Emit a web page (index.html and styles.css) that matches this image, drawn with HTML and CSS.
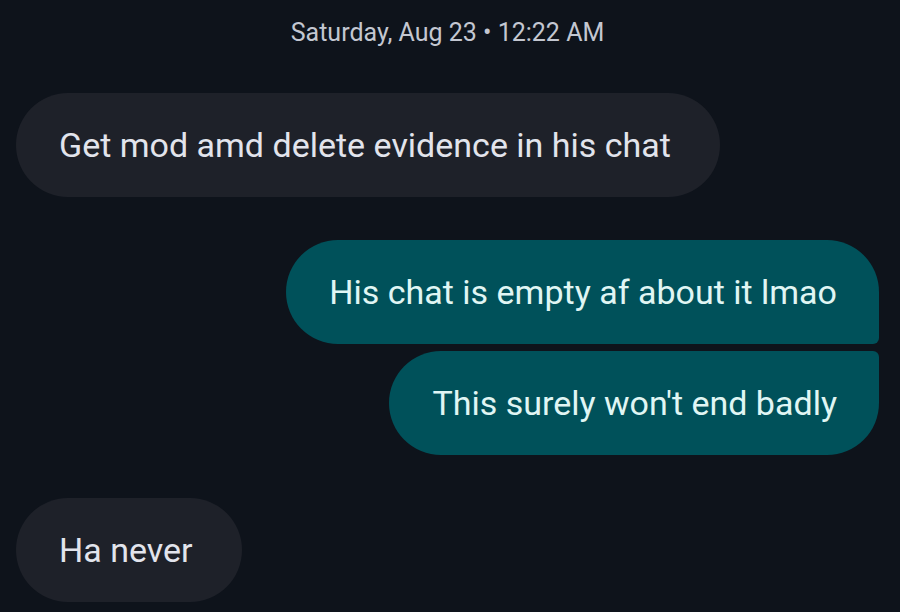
FILE: index.html
```html
<!DOCTYPE html>
<html>
<head>
<meta charset="utf-8">
<link rel="stylesheet" href="styles.css">
</head>
<body>
<div class="thread">
  <div class="stamp">Saturday, Aug 23 • 12:22 AM</div>
  <div class="row in"><div class="bubble in-b">Get mod amd delete evidence in his chat</div></div>
  <div class="group out">
    <div class="bubble out-b first">His chat is empty af about it lmao</div>
    <div class="bubble out-b last">This surely won't end badly</div>
  </div>
  <div class="row in"><div class="bubble in-b">Ha never</div></div>
</div>
</body>
</html>
```
FILE: styles.css
```css
html, body {
  margin: 0;
  padding: 0;
  background: #0e131b;
  height: 100%;
  overflow: hidden;
}
.thread {
  display: flex;
  flex-direction: column;
  padding: 0 21px 0 16px;
  font-family: Roboto, "Noto Sans", sans-serif;
}
.stamp {
  text-align: center;
  color: #c3c7d1;
  font-size: 25px;
  line-height: 30px;
  padding-top: 18px;
  margin-bottom: 45px;
}
.row {
  display: flex;
}
.row.in {
  justify-content: flex-start;
}
.group {
  display: flex;
  flex-direction: column;
  align-items: flex-end;
  gap: 7px;
  margin: 43px 0;
}
.bubble {
  height: 104px;
  box-sizing: border-box;
  display: flex;
  align-items: center;
  font-size: 34px;
  border-radius: 52px;
  white-space: nowrap;
}
.in-b {
  background: #1e2129;
  color: #e2e4ec;
  padding: 0 49px 0 43px;
}
.out-b {
  background: #00515a;
  color: #e0f6f4;
  padding: 0 42px 0 43px;
}
.out-b.first {
  border-radius: 52px 52px 6px 52px;
}
.out-b.last {
  border-radius: 52px 6px 52px 52px;
}
```
